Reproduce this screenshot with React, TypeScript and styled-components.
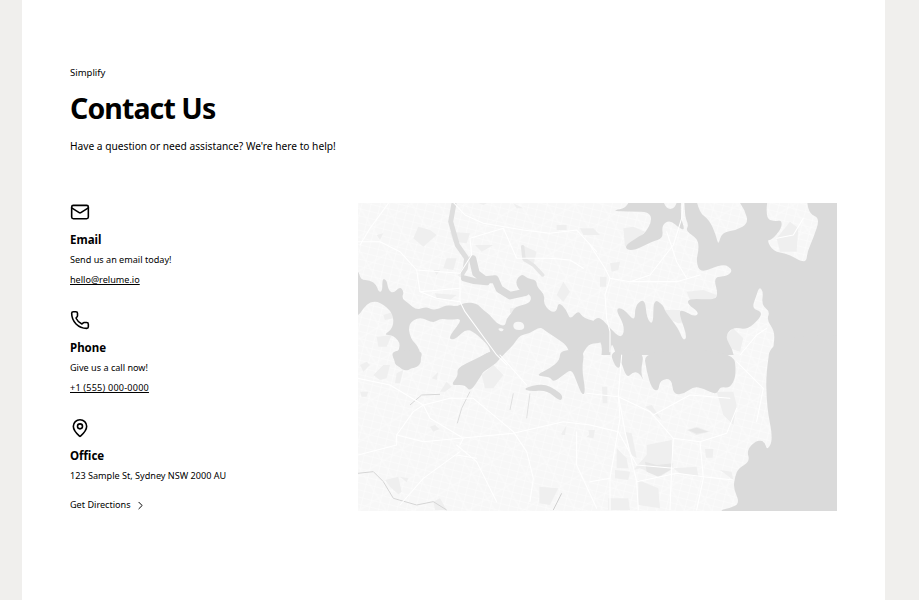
import React from "react";
import styled, { createGlobalStyle } from "styled-components";
import { ChevronRight, Mail, MapPin, Phone } from "lucide-react";

const Global = createGlobalStyle`
  html, body { margin: 0; padding: 0; height: 100%; background: #f0efed; overflow: hidden; }
  #root { height: 100%; }
  * { box-sizing: border-box; }
`;

const Page = styled.div`
  width: 863px;
  height: 600px;
  margin-left: 22px;
  padding: 66px 48px 0;
  background: #fff;
  color: #000;
  font-family: "Noto Sans", "Open Sans", sans-serif;
`;
const Eyebrow = styled.div`
  font-size: 9.5px;
  line-height: 14px;
`;
const Title = styled.h1`
  margin: 10px 0 0;
  font-size: 28.5px;
  line-height: 37px;
  font-weight: 700;
  letter-spacing: -0.9px;
`;
const Lead = styled.p`
  margin: 11px 0 0;
  font-size: 10.2px;
  line-height: 16px;
`;
const Content = styled.div`
  display: grid;
  grid-template-columns: 1fr 479px;
  margin-top: 49px;
`;
const ContactList = styled.div`
  display: flex;
  flex-direction: column;
  gap: 24px;
`;
const Item = styled.div`
  display: flex;
  flex-direction: column;
`;
const IconBox = styled.div`
  height: 20px;
  color: #000;
  display: flex;
  align-items: flex-start;
  margin-bottom: 9px;
  svg { display: block; margin-top: -1px; }
`;
const ItemTitle = styled.div`
  font-size: 11.5px;
  line-height: 16px;
  font-weight: 700;
`;
const ItemText = styled.div`
  margin-top: 5px;
  font-size: 9.1px;
  line-height: 14px;
`;
const ItemLink = styled.a<{ $spacing?: number }>`
  display: block;
  margin-top: 6px;
  font-size: 9.1px;
  line-height: 14px;
  letter-spacing: ${(p) => p.$spacing ?? 0}px;
  color: #000;
  text-decoration: underline;
`;
const Directions = styled.a`
  display: flex;
  align-items: center;
  gap: 3px;
  margin-top: 15px;
  font-size: 9.1px;
  line-height: 14px;
  color: #000;
`;
const MapFrame = styled.div`
  width: 479px;
  height: 308px;
  svg { display: block; }
`;

type Pt = number[];
const smooth = (flat: Pt) => {
  const p: [number, number][] = [];
  for (let i = 0; i < flat.length; i += 2) p.push([flat[i], flat[i + 1]]);
  const m = (a: [number, number], b: [number, number]) => `${(a[0] + b[0]) / 2} ${(a[1] + b[1]) / 2}`;
  let d = `M${m(p[p.length - 1], p[0])}`;
  p.forEach((c, i) => {
    const n = p[(i + 1) % p.length];
    d += `Q${c[0]} ${c[1]} ${m(c, n)}`;
  });
  return d + "Z";
};
const line = (flat: Pt) => {
  let d = "";
  for (let i = 0; i < flat.length; i += 2) d += `${i ? "L" : "M"}${flat[i]} ${flat[i + 1]}`;
  return d;
};

const WATER = "#dadada";
const LAND = "#f7f7f7";
const PARK = "#efefef";

const z3Water: Pt[] = [
  [-30, 222, 24, 222, 32, 255, 60, 255, 80, 270, 85, 290, 97, 290, 97, 250, 110, 255, 115, 285, 130, 295, 150, 275, 162, 290, 155, 310, 175, 325, 200, 345, 230, 335, 245, 345, 270, 340, 290, 330, 320, 335, 345, 322, 380, 325, 400, 345, 420, 360, 440, 385, 465, 395, 470, 370, 485, 355, 495, 335, 540, 325, 545, 300, 510, 290, 495, 260, 515, 235, 530, 250, 560, 255, 560, 275, 585, 300, 580, 325, 600, 350, 620, 350, 625, 320, 650, 345, 660, 375, 685, 345, 700, 370, 760, 385, 760, 445, 720, 445, 700, 470, 685, 510, 660, 480, 650, 450, 620, 430, 590, 410, 570, 395, 540, 415, 510, 420, 490, 450, 470, 470, 450, 490, 440, 475, 420, 470, 400, 480, 375, 500, 350, 525, 400, 520, 430, 470, 385, 420, 350, 400, 320, 430, 300, 435, 300, 420, 340, 370, 300, 375, 270, 370, 250, 385, 210, 365, 175, 385, 180, 430, 210, 460, 215, 520, 140, 520, 130, 490, 155, 450, 130, 420, 100, 420, 130, 400, 130, 355, 90, 320, 60, 320, 40, 340, 24, 365, -30, 365],
];
const z3Arms: { pts: Pt; w: number; c: string }[] = [
  { pts: [312, 25, 302, 80, 322, 150, 350, 190, 346, 220, 334, 240], w: 5, c: "#dedede" },
  { pts: [368, 192, 378, 235, 405, 255, 435, 252, 448, 282, 480, 302, 525, 292], w: 7.5, c: WATER },
  { pts: [342, 250, 372, 258, 410, 262], w: 6, c: WATER },
  { pts: [518, 155, 522, 192, 552, 212, 578, 240], w: 3.5, c: "#e6e6e6" },
];
const z3Parks: Pt[] = [
  [80, 120, 100, 115, 90, 135],
  [205, 95, 240, 105, 260, 120, 220, 155, 190, 130],
  [290, 190, 320, 190, 310, 225, 280, 220],
  [250, 225, 270, 225, 260, 240],
  [300, 110, 360, 115, 350, 145, 310, 140],
  [255, 295, 320, 300, 300, 315, 260, 310],
  [270, 335, 310, 330, 300, 345, 275, 345],
  [480, 340, 520, 335, 520, 350, 480, 355],
  [80, 425, 125, 420, 110, 455, 85, 455],
  [100, 360, 130, 350, 130, 370, 105, 375],
  [515, 150, 560, 170, 550, 210, 520, 200],
  [620, 90, 650, 90, 650, 105, 620, 105],
  [690, 100, 730, 100, 750, 120, 700, 120],
  [490, 25, 520, 40, 500, 40],
  [380, 22, 415, 22, 400, 30],
  [640, 260, 660, 290, 640, 320, 620, 300],
  [375, 150, 430, 150, 395, 170],
];
const z3Islands: Pt[] = [
  [442, 398, 465, 402, 452, 412],
  [490, 380, 520, 380, 525, 405, 490, 405],
];
const z3Roads: Pt[] = [
  [24, 140, 90, 140, 150, 170, 200, 225, 210, 290, 260, 310, 330, 320, 345, 350, 440, 480, 470, 510],
  [310, 22, 345, 60, 400, 85, 520, 105, 600, 115, 680, 105, 740, 170],
  [30, 150, 60, 100, 115, 25],
  [330, 320, 330, 235, 365, 180, 360, 130, 460, 100],
  [600, 190, 660, 195, 700, 220],
  [200, 225, 270, 230, 330, 235],
  [210, 290, 330, 280],
  [460, 100, 500, 190, 600, 190],
];

const z4Lands: Pt[] = [
  [-40, -40, 125, -40, 118, 38, 60, 48, 130, 50, 175, 50, 187, 75, 165, 115, 145, 125, 100, 155, 125, 170, 185, 140, 220, 130, 215, 90, 240, 75, 270, 100, 285, 105, 270, 62, 278, -40, 282, -40, 284, 65, 296, 90, 287, 108, 322, 130, 327, 160, 318, 200, 332, 235, 400, 205, 430, 225, 410, 245, 370, 245, 385, 300, 370, 315, 300, 310, 290, 325, 330, 355, 310, 365, 280, 345, 265, 350, 292, 425, 280, 438, 265, 400, 225, 350, 220, 330, 190, 310, 190, 392, 170, 370, 165, 310, 135, 330, 135, 382, 100, 340, 75, 340, 105, 395, 95, 432, 60, 400, 30, 365, 10, 375, 0, 395, -40, 395],
  [205, -40, 265, -40, 262, 38, 225, 45],
  [310, -40, 440, -40, 440, 10, 465, 45, 475, 85, 440, 105, 395, 112, 385, 152, 378, 120, 358, 75, 325, 50],
  [540, -40, 650, -40, 650, 20, 660, 58, 690, 70, 670, 130, 652, 170, 650, 198, 635, 200, 590, 175, 550, 170, 530, 135, 545, 135, 575, 100, 575, 75, 555, 80, 525, 70],
  [508, 275, 520, 290, 515, 330, 540, 350, 530, 375, 555, 410, 550, 460, 545, 530, 432, 530, 433, 470, 403, 425, 430, 395, 470, 405, 510, 370, 515, 350, 485, 340, 500, 300],
  [352, 475, 362, 488, 356, 478],
  [60, 530, 62, 440, 75, 465, 88, 530],
  [-40, 530, -40, 462, 40, 420, 30, 530],
  [108, 530, 118, 470, 125, 530],
  [150, 530, 175, 470, 165, 530],
];
const z4Parks: Pt[] = [
  [100, 100, 130, 95, 165, 110, 145, 130, 105, 155],
  [290, 290, 340, 285, 380, 300, 370, 315, 300, 315],
  [225, 345, 270, 345, 285, 380, 265, 385, 230, 370],
  [405, 425, 430, 400, 460, 430, 450, 470, 420, 460],
  [560, 130, 600, 80, 625, 100, 620, 170, 570, 170],
  [30, 245, 50, 245, 48, 275, 30, 275],
  [60, 205, 90, 200, 85, 225, 65, 230],
];
const z4Roads: Pt[] = [
  [45, 220, 60, 250, 45, 300, 50, 370, 60, 410, 60, 470],
  [60, 250, 120, 260, 180, 240, 250, 150, 275, 70, 280, 20],
  [0, 150, 45, 220],
  [120, 260, 260, 260, 330, 240],
  [230, 110, 260, 200, 290, 250],
  [560, 130, 610, 120, 640, 70],
  [450, 480, 500, 420, 530, 400],
];

const z5Water: Pt[] = [
  [125, -15, 130, 15, 160, 50, 190, 40, 215, 10, 215, -15],
  [320, 40, 380, 10, 430, -15, 470, -15, 440, 25, 400, 50, 395, 60, 360, 112, 345, 88, 300, 92, 325, 62],
  [518, 100, 580, 85, 620, 105, 640, 125, 630, 140, 590, 105, 540, 110],
  [555, 62, 600, 40, 630, 15, 630, -15, 705, -15, 695, 40, 707, 110, 697, 122, 680, 80, 665, 42, 640, 60, 610, 82, 600, 65],
];
const z5Parks: Pt[] = [
  [395, 60, 430, 30, 460, 60, 430, 100, 405, 100],
  [270, 110, 290, 80, 305, 95, 285, 110],
  [30, 30, 50, 20, 60, 30, 40, 50],
  [70, 60, 100, 30, 120, 30, 110, 70, 90, 75],
  [140, 55, 160, 45, 150, 85, 135, 85],
  [245, 70, 265, 50, 260, 75],
  [30, 110, 55, 110, 50, 125, 35, 125],
  [240, 215, 255, 210, 268, 222, 250, 230],
  [105, 375, 145, 365, 155, 410, 145, 418, 120, 395],
  [150, 365, 175, 370, 170, 382],
  [568, 395, 625, 400, 600, 450, 568, 445],
  [635, 235, 650, 210, 645, 240, 635, 240],
  [710, 245, 735, 225, 730, 250],
  [250, 440, 270, 430, 290, 465, 255, 465],
];
const z5Roads: Pt[] = [
  [24, 70, 120, 90, 220, 150, 240, 190, 340, 250, 330, 270],
  [220, 150, 300, 130, 370, 130, 490, 230, 530, 290, 550, 370, 540, 440],
  [140, 240, 220, 260, 330, 250, 490, 235, 640, 200, 720, 210],
  [24, 300, 140, 270, 140, 240, 190, 170, 220, 150],
  [320, 270, 380, 320, 400, 360, 440, 440],
  [330, 290, 220, 370, 150, 450],
  [450, 0, 530, 90],
  [320, 300, 380, 310],
  [680, 230, 680, 330, 740, 460],
];
const z5Thin: { pts: Pt; c: string }[] = [
  { pts: [24, 355, 70, 350, 100, 380, 130, 430, 200, 450, 250, 440, 290, 465], c: "#d5d5d5" },
  { pts: [360, 110, 335, 160, 322, 205], c: "#dcdcdc" },
  { pts: [490, 115, 480, 165], c: "#e0e0e0" },
  { pts: [540, 115, 530, 190], c: "#e2e2e2" },
  { pts: [180, 150, 215, 120, 270, 118], c: "#d8d8d8" },
  { pts: [635, 415, 610, 465], c: "#cfcfcf" },
];

const z6Water: Pt[] = [
  [160, -15, 170, 50, 185, 100, 205, 110, 210, 75, 245, 70, 250, 120, 285, 115, 310, 95, 340, 100, 380, 120, 390, 95, 420, 100, 440, 60, 430, -15],
  [58, -15, 75, 35, 90, 40, 92, 15, 110, 70, 130, 50, 150, 55, 170, 95, 150, 55, 165, -15],
  [545, -60, 528, 60, 530, 130, 535, 180, 545, 230, 545, 265, 530, 285, 525, 260, 500, 255, 470, 285, 480, 320, 445, 340, 435, 365, 430, 400, 450, 445, 420, 460, 385, 466, 370, 560, 900, 560, 900, -60],
];
const z6Parks: Pt[] = [
  [380, 110, 430, 110, 440, 150, 430, 210, 400, 180],
  [290, 225, 320, 215, 360, 230, 320, 240],
  [345, 282, 370, 282, 368, 308, 348, 308],
  [170, 270, 245, 255, 250, 340, 210, 365, 150, 340, 130, 345, 170, 300],
  [145, 375, 205, 400, 210, 460, 145, 450],
  [250, 340, 320, 335, 325, 365, 270, 355],
  [75, 345, 120, 350, 115, 375, 75, 370],
  [80, 280, 110, 310, 115, 340, 80, 340],
  [55, 430, 115, 430, 120, 465, 55, 465],
  [105, 230, 125, 235, 140, 310, 125, 300],
  [-5, 225, 15, 225, 0, 250],
  [390, 345, 425, 350, 430, 375],
  [165, 155, 185, 150, 215, 195, 190, 175],
  [36, 95, 52, 95, 52, 145, 38, 145],
];
const z6Dark: Pt[] = [
  [165, 320, 200, 330, 250, 325, 240, 345, 205, 365, 170, 350],
  [295, 225, 320, 218, 355, 230, 320, 236],
];
const z6Roads: Pt[] = [
  [95, 0, 85, 120, 105, 230, 140, 380, 145, 465],
  [60, 465, 60, 370, 90, 190, 85, 120],
  [-10, 115, 85, 125, 180, 170, 250, 250, 330, 260, 410, 235, 440, 160],
  [330, 260, 340, 370, 320, 465],
  [0, 210, 85, 230, 140, 330, 250, 340],
  [250, 250, 245, 340, 240, 465],
  [140, 380, 260, 355, 340, 365, 430, 375],
  [190, 180, 300, 120, 420, 130],
  [0, 380, 60, 370],
  [440, 20, 520, 100, 500, 200],
];

const Layer: React.FC<{ x: number; y: number; children: React.ReactNode }> = ({ x, y, children }) => (
  <g transform={`translate(${x} ${y}) scale(0.3333)`}>{children}</g>
);
const Polys: React.FC<{ data: Pt[]; fill: string }> = ({ data, fill }) => (
  <>
    {data.map((p, i) => (
      <path key={i} d={smooth(p)} fill={fill} />
    ))}
  </>
);
const Plots: React.FC<{ data: Pt[]; fill: string }> = ({ data, fill }) => (
  <>
    {data.map((p, i) => (
      <path key={i} d={`${line(p)}Z`} fill={fill} />
    ))}
  </>
);
const Roads: React.FC<{ data: Pt[]; w?: number }> = ({ data, w = 3.2 }) => (
  <>
    {data.map((p, i) => (
      <path key={i} d={line(p)} fill="none" stroke="#fff" strokeWidth={w} strokeLinejoin="round" strokeLinecap="round" />
    ))}
  </>
);

const SydneyMap = () => (
  <svg width="479" height="308" viewBox="358 203 479 308" aria-label="Map of Sydney">
    <defs>
      <pattern id="streets" width="9" height="7" patternUnits="userSpaceOnUse" patternTransform="rotate(14)">
        <path d="M0 3.5H9M4.5 0V7" stroke="#fbfbfb" strokeWidth="0.6" fill="none" />
      </pattern>
      <pattern id="avenues" width="23" height="29" patternUnits="userSpaceOnUse" patternTransform="rotate(-32)">
        <path d="M0 14H23M11 0V29" stroke="#fcfcfc" strokeWidth="0.7" fill="none" />
      </pattern>
      <clipPath id="northClip">
        <rect x="-10" y="0" width="790" height="480" />
      </clipPath>
    </defs>
    <rect x="358" y="203" width="479" height="308" fill={LAND} />
    <rect x="358" y="203" width="479" height="308" fill="url(#streets)" />
    <rect x="358" y="203" width="479" height="308" fill="url(#avenues)" />
    <Layer x={350} y={195}><Plots data={z3Parks} fill={PARK} /></Layer>
    <Layer x={590} y={195}><Plots data={z4Parks} fill={PARK} /></Layer>
    <Layer x={350} y={355}><Plots data={z5Parks} fill={PARK} /></Layer>
    <Layer x={590} y={355}>
      <Plots data={z6Parks} fill={PARK} />
      <Plots data={z6Dark} fill="#e6e6e6" />
    </Layer>
    <Layer x={590} y={195}>
      <g clipPath="url(#northClip)">
        <path
          fillRule="evenodd"
          fill={WATER}
          d={`M-100 -100H900V600H-100Z${z4Lands.map(smooth).join("")}`}
        />
      </g>
    </Layer>
    <Layer x={590} y={355}><Polys data={z6Water} fill={WATER} /></Layer>
    <Layer x={350} y={195}>
      <Polys data={z3Water} fill={WATER} />
      <Polys data={z3Islands} fill={LAND} />
      {z3Arms.map((a, i) => (
        <path key={i} d={line(a.pts)} fill="none" stroke={a.c} strokeWidth={a.w * 3} strokeLinejoin="round" strokeLinecap="round" />
      ))}
    </Layer>
    <Layer x={350} y={355}>
      <Polys data={z5Water} fill={WATER} />
      {z5Thin.map((a, i) => (
        <path key={i} d={line(a.pts)} fill="none" stroke={a.c} strokeWidth="3" strokeLinejoin="round" />
      ))}
    </Layer>
    <Layer x={350} y={195}><Roads data={z3Roads} /></Layer>
    <Layer x={590} y={195}><Roads data={z4Roads} /></Layer>
    <Layer x={350} y={355}><Roads data={z5Roads} /></Layer>
    <Layer x={590} y={355}><Roads data={z6Roads} /></Layer>
  </svg>
);

export default function App() {
  return (
    <>
      <Global />
      <Page>
        <Eyebrow>Simplify</Eyebrow>
        <Title>Contact Us</Title>
        <Lead>Have a question or need assistance? We're here to help!</Lead>
        <Content>
          <ContactList>
            <Item>
              <IconBox><Mail size={20} strokeWidth={1.9} /></IconBox>
              <ItemTitle>Email</ItemTitle>
              <ItemText>Send us an email today!</ItemText>
              <ItemLink>hello@relume.io</ItemLink>
            </Item>
            <Item>
              <IconBox><Phone size={20} strokeWidth={1.9} /></IconBox>
              <ItemTitle>Phone</ItemTitle>
              <ItemText>Give us a call now!</ItemText>
              <ItemLink $spacing={0.2}>+1 (555) 000-0000</ItemLink>
            </Item>
            <Item>
              <IconBox><MapPin size={20} strokeWidth={1.9} /></IconBox>
              <ItemTitle>Office</ItemTitle>
              <ItemText>123 Sample St, Sydney NSW 2000 AU</ItemText>
              <Directions>Get Directions <ChevronRight size={13} strokeWidth={1.8} /></Directions>
            </Item>
          </ContactList>
          <MapFrame><SydneyMap /></MapFrame>
        </Content>
      </Page>
    </>
  );
}
